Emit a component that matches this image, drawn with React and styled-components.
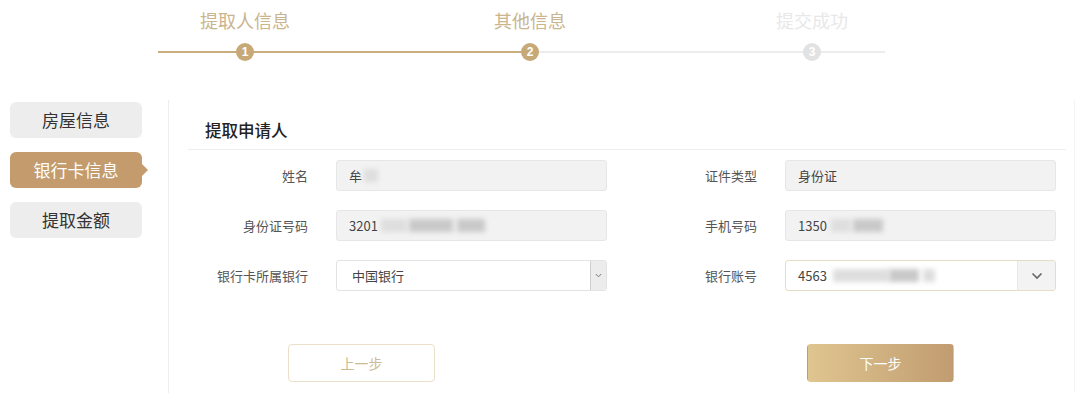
import React from 'react'
import styled, { createGlobalStyle, css } from 'styled-components'

const GOLD = '#c9ad7c'
const GREY_LINE = '#ececec'

const GlobalStyle = createGlobalStyle`
  html, body {
    margin: 0;
    padding: 0;
    background: #fff;
    font-family: 'Noto Sans CJK SC', 'Noto Sans', sans-serif;
  }
`

const steps = [
  { label: '提取人信息', done: true },
  { label: '其他信息', done: true },
  { label: '提交成功', done: false },
]

const Apply = () => (
  <Page>
    <GlobalStyle />
    <StepBar>
      <Segment $w={32} $on />
      {steps.map((s, i) => (
        <React.Fragment key={s.label}>
          <Step>
            <StepLabel $on={s.done}>{s.label}</StepLabel>
            <Track $left={s.done} $right={i === 0}>
              <Dot $on={s.done}>{i + 1}</Dot>
            </Track>
          </Step>
          {i === 0 && <Segment $w={175} $on />}
          {i === 1 && <Segment $w={172} />}
        </React.Fragment>
      ))}
      <Segment $w={18} />
    </StepBar>

    <Main>
      <Sidebar>
        <NavItem>房屋信息</NavItem>
        <NavItem $active>银行卡信息</NavItem>
        <NavItem>提取金额</NavItem>
      </Sidebar>

      <Content>
        <SectionTitle>提取申请人</SectionTitle>
        <Form>
          <Field>
            <Label>姓名</Label>
            <Input $readonly>牟<Blur $w={14} $light /></Input>
          </Field>
          <Field>
            <Label>证件类型</Label>
            <Input $readonly>身份证</Input>
          </Field>
          <Field>
            <Label>身份证号码</Label>
            <Input $readonly>
              3201<Blur $w={26} $gap={3} $light /><Blur $w={44} $gap={2} /><Blur $w={28} $gap={4} />
            </Input>
          </Field>
          <Field>
            <Label>手机号码</Label>
            <Input $readonly>
              1350<Blur $w={20} $gap={4} $light /><Blur $w={30} $gap={2} />
            </Input>
          </Field>
          <Field>
            <Label>银行卡所属银行</Label>
            <Select>
              <SelectText $indent>中国银行</SelectText>
              <SmallArrow>
                <svg width="7" height="5" viewBox="0 0 7 5">
                  <path d="M0.8 1 L3.5 3.8 L6.2 1" fill="none" stroke="#777" strokeWidth="1" />
                </svg>
              </SmallArrow>
            </Select>
          </Field>
          <Field>
            <Label>银行账号</Label>
            <Select $focus>
              <SelectText>
                4563<Blur $w={56} $gap={6} $light /><Blur $w={30} $gap={0} /><Blur $w={12} $gap={4} $light />
              </SelectText>
              <ArrowBox>
                <svg width="12" height="8" viewBox="0 0 12 8">
                  <path d="M1.5 1.5 L6 6 L10.5 1.5" fill="none" stroke="#666" strokeWidth="1.6" />
                </svg>
              </ArrowBox>
            </Select>
          </Field>
        </Form>

        <Actions>
          <Button>上一步</Button>
          <Button $primary>下一步</Button>
        </Actions>
      </Content>
    </Main>
  </Page>
)

const Page = styled.div`
  width: 1080px;
  height: 393px;
  overflow: hidden;
  background: #fff;
`

const StepBar = styled.div`
  display: flex;
  align-items: flex-end;
  padding-left: 158px;
  height: 61px;
`

const Segment = styled.div`
  width: ${p => p.$w}px;
  height: 2px;
  margin-bottom: 8px;
  background: ${p => (p.$on ? GOLD : GREY_LINE)};
`

const Step = styled.div`
  width: 110px;
  display: flex;
  flex-direction: column;
  align-items: center;
`

const StepLabel = styled.div`
  font-size: 18px;
  line-height: 24px;
  margin-bottom: 11px;
  color: ${p => (p.$on ? '#cab58e' : '#e8e8e8')};
`

const Track = styled.div`
  width: 100%;
  height: 18px;
  display: flex;
  justify-content: center;
  background: linear-gradient(
      to right,
      ${p => (p.$left ? GOLD : GREY_LINE)} 50%,
      ${p => (p.$right ? GOLD : GREY_LINE)} 50%
    )
    center / 100% 2px no-repeat;
`

const Dot = styled.div`
  width: 18px;
  height: 18px;
  border-radius: 50%;
  background: ${p => (p.$on ? '#c7a977' : '#e2e2e2')};
  color: #fff;
  font-size: 12px;
  font-weight: 700;
  line-height: 18px;
  text-align: center;
  font-family: 'Liberation Sans', Arial, sans-serif;
`

const Main = styled.div`
  display: flex;
  margin-top: 39px;
`

const Sidebar = styled.div`
  width: 158px;
  padding: 2px 0 0 10px;
  border-right: 1px solid #eeeeee;
  display: flex;
  flex-direction: column;
  gap: 14px;
  height: 293px;
  box-sizing: content-box;
`

const NavItem = styled.div`
  position: relative;
  width: 132px;
  height: 36px;
  border-radius: 6px;
  background: #eeedee;
  color: #333;
  font-size: 17px;
  line-height: 36px;
  text-align: center;

  ${p =>
    p.$active &&
    css`
      background: #c39b6c;
      color: #fff;
      &::after {
        content: '';
        position: absolute;
        right: -6px;
        top: 50%;
        margin-top: -6px;
        border-style: solid;
        border-width: 6px 0 6px 6px;
        border-color: transparent transparent transparent #c39b6c;
      }
    `}
`

const Content = styled.div`
  flex: 1;
  padding: 0 8px 0 19px;
  margin-right: 5px;
  border-right: 1px solid #f4f4f4;
`

const SectionTitle = styled.div`
  padding: 20px 0 8px 17px;
  font-size: 16.5px;
  line-height: 21px;
  font-weight: 500;
  color: #222;
  border-bottom: 1px solid #eeeeee;
`

const Form = styled.div`
  display: grid;
  grid-template-columns: 419px 419px;
  column-gap: 30px;
  row-gap: 19px;
  padding-top: 10px;
`

const Field = styled.div`
  display: flex;
  align-items: center;
  gap: 28px;
`

const Label = styled.div`
  width: 120px;
  text-align: right;
  font-size: 13px;
  color: #555;
`

const Input = styled.div`
  width: 271px;
  height: 31px;
  box-sizing: border-box;
  display: flex;
  align-items: center;
  padding-left: 12px;
  border: 1px solid #e6e6e6;
  border-radius: 3px;
  background: ${p => (p.$readonly ? '#f2f2f2' : '#fff')};
  font-size: 13px;
  color: #444;
`

const Blur = styled.span`
  display: inline-block;
  width: ${p => p.$w}px;
  height: 13px;
  margin-left: ${p => p.$gap ?? 2}px;
  background: ${p => (p.$light ? '#dedede' : '#c9c9c9')};
  filter: blur(2.5px);
`

const Select = styled.div`
  width: 271px;
  height: 31px;
  box-sizing: border-box;
  display: flex;
  align-items: stretch;
  border: 1px solid ${p => (p.$focus ? '#e6dcc8' : '#e3e3e3')};
  border-radius: 3px;
  background: #fff;
  overflow: hidden;
`

const SelectText = styled.div`
  flex: 1;
  display: flex;
  align-items: center;
  padding-left: ${p => (p.$indent ? 15 : 12)}px;
  font-size: 13px;
  color: #444;
`

const SmallArrow = styled.div`
  width: 15px;
  display: flex;
  align-items: center;
  justify-content: center;
  background: #ececec;
  border-left: 1px solid #cfcfcf;
`

const ArrowBox = styled.div`
  width: 37px;
  display: flex;
  align-items: center;
  justify-content: center;
  background: #f3f3f3;
  border-left: 1px solid #e8e8e8;
`

const Actions = styled.div`
  display: flex;
  padding-left: 100px;
  gap: 372px;
  margin-top: 53px;
`

const Button = styled.div`
  width: 147px;
  height: 38px;
  box-sizing: border-box;
  border-radius: 4px;
  font-size: 14px;
  line-height: 36px;
  text-align: center;
  border: 1px solid #eadfc9;
  color: #cdbb95;
  background: #fff;

  ${p =>
    p.$primary &&
    css`
      border-color: transparent;
      color: #fff;
      background: linear-gradient(to right, #dfc590, #c19c70);
    `}
`

export default Apply
